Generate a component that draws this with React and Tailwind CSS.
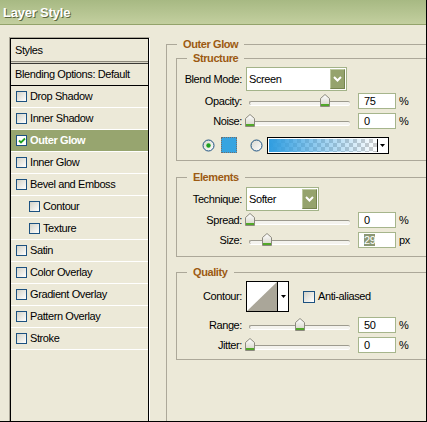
import React from "react";

const styles = [
  { label: "Drop Shadow" },
  { label: "Inner Shadow" },
  { label: "Outer Glow", on: true },
  { label: "Inner Glow" },
  { label: "Bevel and Emboss" },
  { label: "Contour", sub: true },
  { label: "Texture", sub: true },
  { label: "Satin" },
  { label: "Color Overlay" },
  { label: "Gradient Overlay" },
  { label: "Pattern Overlay" },
  { label: "Stroke" },
];

function Check({ on, big }) {
  return (
    <span
      className={
        "flex flex-none items-center justify-center border border-[#1c5180] " +
        (on ? "bg-white " : "bg-linear-to-br from-[#d3d2c8] to-white ") +
        (big ? "h-[12px] w-[12px]" : "h-[11px] w-[11px]")
      }
    >
      {on && (
        <svg width="8" height="8" viewBox="0 0 8 8">
          <path d="M1 3.5 L3 5.5 L7 1.5" fill="none" stroke="#21a121" strokeWidth="1.8" />
        </svg>
      )}
    </span>
  );
}

function Radio({ on }) {
  return (
    <svg width="13" height="13" viewBox="0 0 13 13" className="flex-none">
      <defs>
        <linearGradient id="radfill" x1="0" y1="0" x2="1" y2="1">
          <stop offset="0" stopColor="#d8d7ce" />
          <stop offset="1" stopColor="#ffffff" />
        </linearGradient>
      </defs>
      <circle cx="6.5" cy="6.5" r="5.5" fill="url(#radfill)" stroke="#1c5180" />
      {on && <circle cx="6.5" cy="6.5" r="2.2" fill="#21a121" />}
    </svg>
  );
}

function Thumb() {
  return (
    <svg width="10" height="13" viewBox="0 0 10 13">
      <defs>
        <linearGradient id="thumbfill" x1="0" y1="0" x2="0" y2="1">
          <stop offset="0" stopColor="#ffffff" />
          <stop offset="1" stopColor="#d4d2c6" />
        </linearGradient>
      </defs>
      <path d="M0.5 4.5 L5 0.5 L9.5 4.5 V12.5 H0.5 Z" fill="url(#thumbfill)" stroke="#8c8a7e" />
      <rect x="1" y="10" width="8" height="2" fill="#52a72a" />
    </svg>
  );
}

function Slider({ pos }) {
  return (
    <div className="relative ml-[7px] h-[16px] w-[101px] flex-none">
      <div className="mt-[8px] h-[4px] rounded-[2px] border-l border-t border-[#9d9b8f] bg-[#f4f3ee] shadow-[0_1px_0_#fff]" />
      <div className="absolute top-[1px]" style={{ left: pos - 4 }}>
        <Thumb />
      </div>
    </div>
  );
}

function SliderRow({ label, pos, value, unit, className, selected }) {
  return (
    <div className={"flex h-[16px] items-center " + className}>
      <div className="w-[65px] flex-none text-right">{label}</div>
      <Slider pos={pos} />
      <div className="ml-[8px] h-[16px] w-[38px] flex-none border border-[#a6b58c] bg-white pl-[5px] leading-[14px]">
        {selected ? <span className="bg-[#8b9774] text-white">{value}</span> : value}
      </div>
      <span className="ml-[3px]">{unit}</span>
    </div>
  );
}

function Select({ value, className }) {
  return (
    <div
      className={
        "ml-[4px] flex h-[24px] flex-none items-center justify-between border border-[#a3b389] bg-white pl-[2px] pr-[1px] " +
        className
      }
    >
      <span>{value}</span>
      <span className="flex h-[20px] w-[15px] items-center justify-center border border-b-[#76844f] border-l-[#bcc89e] border-r-[#76844f] border-t-[#bcc89e] bg-[#95a36d]">
        <svg width="9" height="6" viewBox="0 0 9 6">
          <path d="M1 1 L4.5 4.5 L8 1" fill="none" stroke="#fff" strokeWidth="2" />
        </svg>
      </span>
    </div>
  );
}

function Legend({ children }) {
  return <legend className="ml-[10px] px-[6px] font-bold leading-[13px] text-[#9c5a12]">{children}</legend>;
}

export default function App() {
  return (
    <div className="flex h-[422px] w-[427px] flex-col overflow-hidden border-b border-r border-black bg-[#ece9d8] font-['Liberation_Sans',Arial,sans-serif] text-[11px] leading-[13px] tracking-[-0.4px] text-black">
      <div className="flex h-[25px] flex-none items-center border-b border-[#93a36b] bg-linear-to-b from-[#a7b983] to-[#c3cf9f] pl-[3px]">
        <span className="text-[13px] font-bold tracking-[-0.2px] text-white [text-shadow:1px_1px_0_#5b6640]">
          Layer Style
        </span>
      </div>

      <div className="flex min-h-0 flex-1">
        <div className="ml-[9px] mt-[12px] w-[141px] flex-none border-l border-r border-t border-l-[#aca899] border-r-white border-t-[#aca899]">
          <div className="h-full border-l border-r border-t border-black">
            <div className="flex h-[22px] items-center pl-[4px]">Styles</div>
            <div className="h-[1px] bg-[#8d8a7d]" />
            <div className="h-[1px] bg-[#d6d3c4]" />
            <div className="h-[1px] bg-[#3a3a36]" />
            <div className="flex h-[22px] items-center border-b border-black pl-[4px]">Blending Options: Default</div>
            {styles.map((s) => (
              <div
                key={s.label}
                className={
                  "flex h-[22px] items-center border-b border-white " +
                  (s.sub ? "pl-[18px] " : "pl-[5px] ") +
                  (s.on ? "bg-[#97a56f] font-bold text-white" : "")
                }
              >
                <Check on={s.on} />
                <span className="ml-[3px]">{s.label}</span>
              </div>
            ))}
          </div>
        </div>

        <fieldset className="ml-[16px] mt-[13px] h-[400px] w-[300px] flex-none border border-[#aca899]">
          <Legend>Outer Glow</Legend>
          <div className="pl-[9px]">
            <fieldset className="mt-[1px] w-[270px] border border-[#aca899] pb-[7px]">
              <Legend>Structure</Legend>
              <div className="mt-[2px] flex items-center">
                <div className="w-[65px] flex-none text-right">Blend Mode:</div>
                <Select value="Screen" className="w-[101px]" />
              </div>
              <SliderRow label="Opacity:" pos={75} value="75" unit="%" className="mt-[2px]" />
              <SliderRow label="Noise:" pos={0} value="0" unit="%" className="mt-[4px]" />
              <div className="mt-[8px] flex h-[16px] items-center">
                <span className="ml-[25px]">
                  <Radio on />
                </span>
                <span className="ml-[6px] h-[16px] w-[16px] flex-none border border-dotted border-[#6f6f6f] bg-[#36a4e0]" />
                <span className="ml-[13px]">
                  <Radio />
                </span>
                <div className="ml-[4px] flex h-[17px] w-[122px] flex-none border border-black bg-white p-[1px]">
                  <div className="flex-1 [background-image:linear-gradient(to_right,#2f9de0,rgba(58,162,226,0.55)_45%,rgba(58,162,226,0)),repeating-conic-gradient(#cdcdcd_0_25%,#ffffff_0_50%)] [background-size:100%_100%,8px_8px]" />
                  <div className="flex w-[10px] items-center justify-center border-l border-black">
                    <svg width="5" height="3" viewBox="0 0 5 3">
                      <path d="M0 0 H5 L2.5 3 Z" fill="#000" />
                    </svg>
                  </div>
                </div>
              </div>
            </fieldset>

            <fieldset className="mt-[10px] w-[270px] border border-[#aca899] pb-[8px]">
              <Legend>Elements</Legend>
              <div className="mt-[3px] flex items-center">
                <div className="w-[65px] flex-none text-right">Technique:</div>
                <Select value="Softer" className="w-[73px]" />
              </div>
              <SliderRow label="Spread:" pos={0} value="0" unit="%" className="mt-[1px]" />
              <SliderRow label="Size:" pos={17} value="29" unit="px" className="mt-[4px]" selected />
            </fieldset>

            <fieldset className="mt-[9px] w-[270px] border border-[#aca899] pb-[6px]">
              <Legend>Quality</Legend>
              <div className="mt-[2px] flex h-[31px] items-center">
                <div className="w-[65px] flex-none text-right">Contour:</div>
                <div className="ml-[4px] flex h-[31px] w-[43px] flex-none border border-black bg-white">
                  <svg width="30" height="29" viewBox="0 0 30 29" className="flex-none">
                    <polygon points="0,29 30,0 30,29" fill="#aaa699" />
                  </svg>
                  <div className="flex flex-1 items-center justify-center border-l border-black">
                    <svg width="5" height="3" viewBox="0 0 5 3">
                      <path d="M0 0 H5 L2.5 3 Z" fill="#000" />
                    </svg>
                  </div>
                </div>
                <span className="ml-[14px]">
                  <Check big />
                </span>
                <span className="ml-[3px]">Anti-aliased</span>
              </div>
              <SliderRow label="Range:" pos={50} value="50" unit="%" className="mt-[5px]" />
              <SliderRow label="Jitter:" pos={0} value="0" unit="%" className="mt-[4px]" />
            </fieldset>
          </div>
        </fieldset>
      </div>
    </div>
  );
}
